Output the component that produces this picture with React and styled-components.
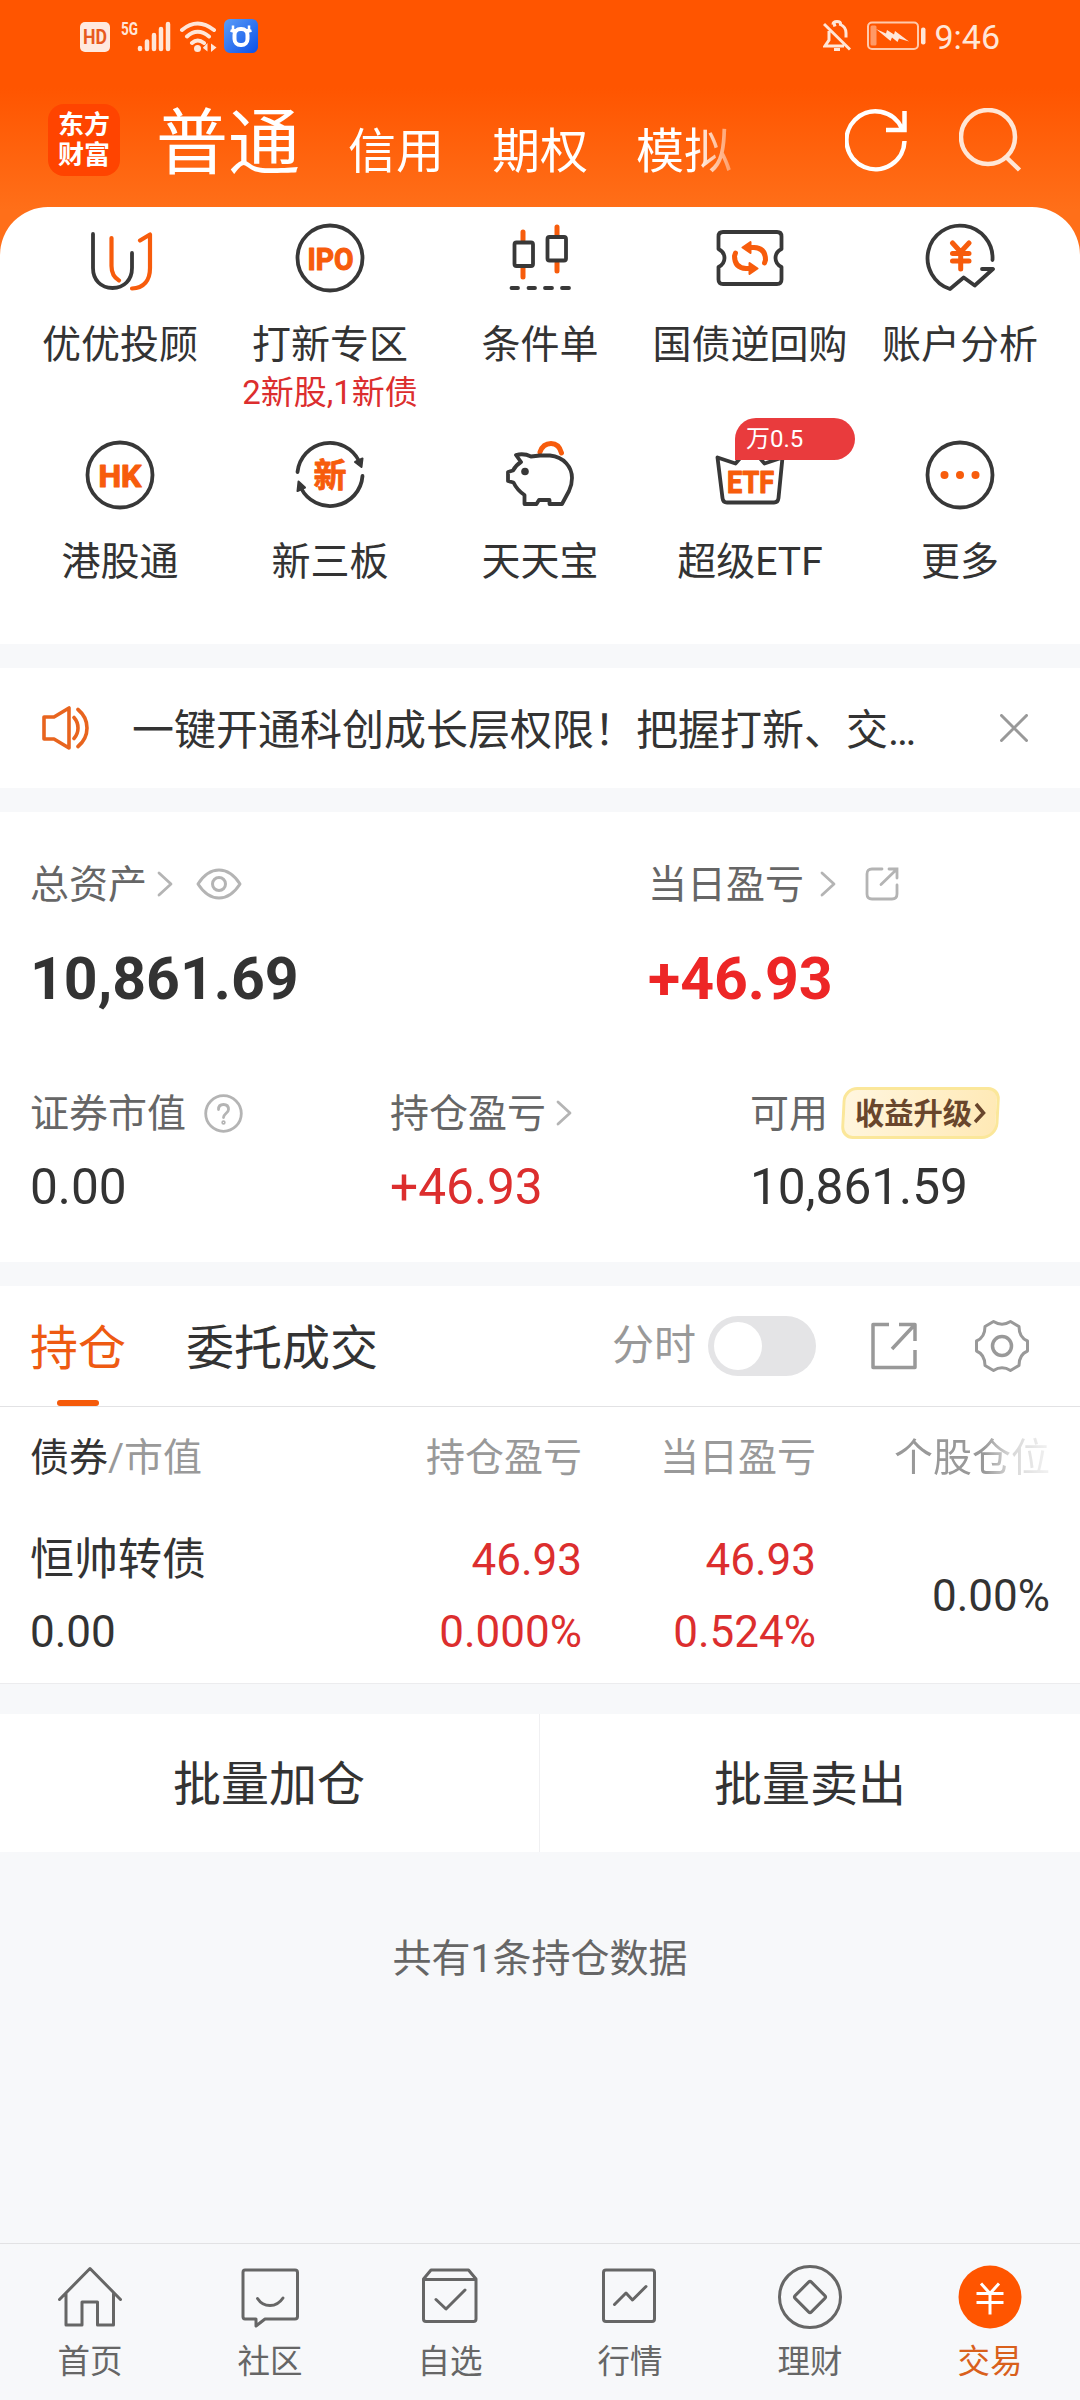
import React from 'react'
import styled, { createGlobalStyle, ThemeProvider } from 'styled-components'

const theme = {
  colors: {
    brand: '#ff5500',
    accent: '#f55a0a',
    dark: '#333333',
    text: '#666666',
    muted: '#999999',
    faint: '#b4b4b4',
    up: '#dc2e2e',
    upStrong: '#ed2626',
    page: '#f7f8fa',
    line: '#e2e2e4',
    status: '#ffe6d8',
  },
  font: `Roboto, 'Noto Sans CJK SC', sans-serif`,
}

const GlobalStyle = createGlobalStyle`
  * {
    box-sizing: border-box;
  }

  body {
    margin: 0;
    background: #f7f8fa;
  }

  svg {
    display: block;
    flex: none;
  }
`

const Screen = styled.div`
  width: 1080px;
  height: 2400px;
  overflow: hidden;
  display: flex;
  flex-direction: column;
  background: ${({ theme }) => theme.colors.page};
  color: ${({ theme }) => theme.colors.dark};
  font-family: ${({ theme }) => theme.font};
  white-space: nowrap;
`

/* header */

const Header = styled.header`
  flex: none;
  height: 255px;
  background: linear-gradient(#ff5500 88px, #ff6f19 210px);
`

const StatusBar = styled.div`
  height: 72px;
  padding: 0 80px;
  display: flex;
  justify-content: space-between;
  align-items: center;
  color: ${({ theme }) => theme.colors.status};
`

const StatusGroup = styled.div`
  display: flex;
  align-items: center;
`

const Clock = styled.span`
  font-size: 34px;
  line-height: 40px;
  margin-left: 8px;
  padding-top: 1px;
`

const HeaderBar = styled.div`
  height: 135px;
  padding: 0 58px 0 48px;
  display: flex;
  align-items: center;
`

const Logo = styled.div`
  width: 72px;
  height: 72px;
  border-radius: 16px;
  background: #ff4400;
  color: #fff;
  font-size: 26px;
  font-weight: 700;
  line-height: 30px;
  display: flex;
  flex-direction: column;
  align-items: center;
  justify-content: center;
`

const HeaderTabs = styled.nav`
  width: 600px;
  margin: 0 auto 0 36px;
  padding-top: 16px;
  display: flex;
  align-items: baseline;
  gap: 48px;
  color: #fff;
  mask-image: linear-gradient(to right, #000 538px, transparent 596px);
`

const HeaderTab = styled.span`
  font-size: ${({ $active }) => ($active ? '72px' : '48px')};
  line-height: 96px;
`

const HeaderActions = styled.div`
  display: flex;
  gap: 50px;
`

/* shortcuts */

const Shortcuts = styled.section`
  flex: none;
  height: 437px;
  margin-top: -48px;
  padding: 15px 15px 0;
  border-radius: 48px 48px 0 0;
  background: #fff;
  display: grid;
  grid-template-columns: repeat(5, 210px);
  grid-template-rows: 217px 205px;
`

const Shortcut = styled.div`
  display: flex;
  flex-direction: column;
  align-items: center;
`

const ShortcutIcon = styled.div`
  position: relative;
  width: 72px;
  height: 72px;
`

const ShortcutLabel = styled.span`
  margin-top: 29px;
  font-size: 39px;
  line-height: 44px;
`

const ShortcutNote = styled.span`
  margin-top: 8px;
  font-size: 33px;
  line-height: 36px;
  color: ${({ theme }) => theme.colors.up};
`

const ShortcutBadge = styled.span`
  position: absolute;
  left: 21px;
  top: -21px;
  width: 120px;
  height: 42px;
  padding-left: 11px;
  border-radius: 21px 21px 21px 0;
  background: #e93b3d;
  color: #fff;
  font-size: 24px;
  line-height: 43px;
`

/* notice */

const Notice = styled.section`
  flex: none;
  height: 120px;
  margin-top: 24px;
  padding: 0 52px 0 42px;
  background: #fff;
  display: flex;
  align-items: center;
`

const NoticeText = styled.p`
  width: 800px;
  margin: 0 auto 0 42px;
  font-size: 42px;
  line-height: 50px;
  padding-top: 5px;
`

/* assets */

const Assets = styled.section`
  flex: none;
  height: 450px;
  margin-top: 24px;
  padding: 46px 30px 0;
  background: #fff;
`

const AssetRow = styled.div`
  display: grid;
  grid-template-columns: ${({ $columns }) => $columns};
  margin-bottom: ${({ $gap }) => $gap || 0}px;
`

const AssetLabel = styled.div`
  height: 52px;
  display: flex;
  align-items: center;
  font-size: 39px;
  color: ${({ theme }) => theme.colors.text};

  span {
    line-height: 50px;
    padding-top: 1px;
  }
`

const Total = styled.div`
  margin-top: 34px;
  font-size: 59px;
  font-weight: 700;
  line-height: 70px;
  color: ${({ theme, $up }) => ($up ? theme.colors.upStrong : theme.colors.dark)};
`

const Amount = styled.div`
  margin-top: 20px;
  font-size: 49.6px;
  line-height: 56px;
  color: ${({ theme, $up }) => ($up ? theme.colors.up : theme.colors.dark)};
`

const Spacer = styled.i`
  width: ${({ $w }) => $w}px;
`

const Upgrade = styled.div`
  width: 157px;
  height: 52px;
  margin-left: 14px;
  padding-left: 10px;
  display: flex;
  align-items: center;
  gap: 2px;
  border: 3px solid #fbe79a;
  border-radius: 14px 12px 16px 12px;
  background: linear-gradient(100deg, #fff6df, #ffe9b5);
  transform: skewX(-3deg);
  color: #69462c;
  font-size: 29.3px;
  font-weight: 700;

  span {
    transform: skewX(3deg);
  }
`

/* positions */

const Positions = styled.section`
  flex: none;
  height: 398px;
  margin-top: 24px;
  background: #fff;
  border-bottom: 1px solid #ececee;
`

const PositionTabs = styled.div`
  height: 121px;
  padding: 0 51px 0 30px;
  display: flex;
  align-items: center;
  border-bottom: 1px solid ${({ theme }) => theme.colors.line};
`

const PositionTab = styled.div`
  height: 120px;
  margin-right: 60px;
  display: flex;
  flex-direction: column;
  align-items: center;
  font-size: 48px;
  line-height: 60px;
  padding-top: 33px;
  color: ${({ theme, $active }) => ($active ? '#ee5a12' : theme.colors.dark)};

  &::after {
    content: '';
    width: 42px;
    height: 6px;
    margin-top: 21px;
    border-radius: 3px;
    background: ${({ theme, $active }) => ($active ? theme.colors.accent : 'transparent')};
  }
`

const PositionTools = styled.div`
  margin-left: auto;
  display: flex;
  align-items: center;
  font-size: 42px;
  line-height: 50px;
  color: ${({ theme }) => theme.colors.muted};
`

const Switch = styled.div`
  width: 108px;
  height: 60px;
  margin: 0 55px 0 12px;
  padding: 6px;
  border-radius: 30px;
  background: #e4e4e6;

  &::before {
    content: '';
    display: block;
    width: 48px;
    height: 48px;
    border-radius: 50%;
    background: #fff;
  }
`

const TableRow = styled.div`
  display: grid;
  grid-template-columns: 318px 234px 234px 234px;
  padding: 0 30px;
  align-items: center;
`

const HeadRow = styled(TableRow)`
  height: 98px;
  font-size: 39px;
  line-height: 50px;
  padding-top: 3px;
  color: ${({ theme }) => theme.colors.muted};

  b {
    font-weight: 400;
    color: ${({ theme }) => theme.colors.dark};
  }
`

const BodyRow = styled(TableRow)`
  height: 178px;
  padding-top: 3px;
  font-size: 44px;
`

const Cell = styled.div`
  display: flex;
  flex-direction: column;
  align-items: ${({ $left }) => ($left ? 'flex-start' : 'flex-end')};
  line-height: 72px;
  color: ${({ theme, $up }) => ($up ? theme.colors.up : 'inherit')};
`

const HeadCell = styled.div`
  text-align: ${({ $left }) => ($left ? 'left' : 'right')};
  mask-image: ${({ $fade }) =>
    $fade
      ? 'linear-gradient(to right, #000 168px, rgba(0, 0, 0, 0.4) 194px, rgba(0, 0, 0, 0.15) 230px)'
      : 'none'};
`

/* batch actions */

const Batch = styled.section`
  flex: none;
  height: 138px;
  margin-top: 30px;
  background: #fff;
  display: grid;
  grid-template-columns: 540px 540px;
`

const BatchButton = styled.div`
  display: flex;
  align-items: center;
  justify-content: center;
  padding: 4px 2px 0 0;
  font-size: 48px;
  line-height: 60px;

  & + & {
    border-left: 1px solid #f0f0f2;
    margin-left: -1px;
    padding-right: 0;
  }
`

const Summary = styled.p`
  margin: 77px 0 0;
  font-size: 39px;
  line-height: 60px;
  text-align: center;
  color: ${({ theme }) => theme.colors.text};
`

/* bottom navigation */

const BottomNav = styled.nav`
  height: 157px;
  margin-top: auto;
  border-top: 1px solid ${({ theme }) => theme.colors.line};
  display: grid;
  grid-template-columns: repeat(6, 180px);
`

const NavItem = styled.div`
  display: flex;
  flex-direction: column;
  align-items: center;
  padding-top: 21px;
  font-size: 32.5px;
  line-height: 40px;
  color: ${({ $active }) => ($active ? '#d9601c' : '#666666')};

  span {
    margin-top: 13px;
  }
`

/* icons */

const Orange = '#f75c0c'

const Glyph = ({ children, size = 72 }) => (
  <svg
    width={size}
    height={size}
    viewBox={`0 0 ${size} ${size}`}
    fill="none"
    stroke="#383838"
    strokeWidth="3.8"
    strokeLinecap="round"
    strokeLinejoin="round"
  >
    {children}
  </svg>
)

const GlyphText = ({ x, y, width, children }) => (
  <text
    x={x}
    y={y}
    textLength={width}
    lengthAdjust="spacingAndGlyphs"
    fontSize="31"
    fontWeight="700"
    fill={Orange}
    stroke={Orange}
    strokeWidth="1.2"
  >
    {children}
  </text>
)

const AdvisorIcon = () => (
  <Glyph>
    <path d="M9 12V46C9 58 17 66 28.500 66S48 58 48 46V31" />
    <g stroke={Orange} strokeWidth="4.200">
      <path d="M27.500 16V44Q27.500 54 35 58.500" />
      <path d="M56 18.500 66 12.500V46C66 58 60 66 48 66.500" />
    </g>
  </Glyph>
)

const IpoIcon = () => (
  <Glyph>
    <circle cx="36" cy="36" r="32.500" />
    <GlyphText x="13.500" y="47.500" width="46">IPO</GlyphText>
  </Glyph>
)

const OrderIcon = () => (
  <Glyph>
    <path stroke={Orange} strokeWidth="5" d="M19 10V18M19 46V55M53 5V13M53 41V49" />
    <rect x="10.500" y="20.500" width="18.500" height="23.500" rx="2" />
    <rect x="43.500" y="15" width="18.500" height="23.500" rx="2" />
    <path d="M7.500 66H14M24.500 66H31M41 66H48M58 66H65" />
  </Glyph>
)

const RepoIcon = () => (
  <Glyph>
    <path d="M9 10H63Q67.500 10 67.500 14.500V27Q61.500 30 61.500 36T67.500 45V57.500Q67.500 62 63 62H9Q4.500 62 4.500 57.500V45Q10.500 42 10.500 36T4.500 27V14.500Q4.500 10 9 10Z" />
    <g stroke={Orange} strokeWidth="5">
      <path d="M36 25.500H40Q51.500 26 51.500 38L50.500 41M36 46.500H32Q20.500 46 20.500 34L21.500 31" />
      <path strokeWidth="2" fill={Orange} d="M28.500 25.500 36.500 20V31ZM43.500 46.500 35.500 41V52Z" />
    </g>
  </Glyph>
)

const AnalysisIcon = () => (
  <Glyph>
    <path d="M68.500 38A32.500 32.500 0 1 0 26 67L39.700 55.500 50.700 63.500 69 47H58" />
    <path stroke={Orange} strokeWidth="5" d="M28.500 21 36.700 30 45 21M36.700 30V47M28.500 31.500H45M28.500 39H45" />
  </Glyph>
)

const HkIcon = () => (
  <Glyph>
    <circle cx="36" cy="36" r="32.500" />
    <GlyphText x="14.500" y="47.500" width="43">HK</GlyphText>
  </Glyph>
)

const NewBoardIcon = () => (
  <Glyph>
    <path d="M3.500 33A32.500 32.500 0 0 1 65 22M68.500 37A32.500 32.500 0 0 1 7 49" />
    <path strokeWidth="2" fill="#383838" d="M61 23 68.500 19.500 67.500 28ZM11 48.500 3.500 52 4.500 42.500Z" />
    <text x="36" y="48" textAnchor="middle" fontSize="33" fontWeight="700" fill={Orange} stroke={Orange} strokeWidth="0.8">
      新
    </text>
  </Glyph>
)

const PiggyIcon = () => (
  <Glyph>
    <path stroke={Orange} strokeWidth="5" d="M36 13Q39 4.500 47 4.500T57.500 14" />
    <path d="M12 16Q20 14 27 17.500L36 16.500H46C60 18 68 28 68 39Q68 46 65 52L58 65H45.500V61H35L32.500 65H20.500V56Q13 51 9.500 43.500L4 42V33L9 31.500Q12 26 17 23Z" />
    <circle cx="21" cy="32.500" r="3.800" fill="#383838" stroke="none" />
  </Glyph>
)

const EtfIcon = () => (
  <Glyph>
    <path d="M3.500 18.500 21.500 24.500 36 8 50.500 24.500 68.500 18.500 64.500 59Q64 63.500 60 63.500H13Q9 63.500 8.500 59Z" />
    <GlyphText x="13" y="53.500" width="47">ETF</GlyphText>
  </Glyph>
)

const MoreIcon = () => (
  <Glyph>
    <circle cx="36" cy="36" r="32.500" />
    <g fill={Orange} stroke="none">
      <circle cx="20.500" cy="36" r="4" />
      <circle cx="36" cy="36" r="4" />
      <circle cx="51.500" cy="36" r="4" />
    </g>
  </Glyph>
)

const StatusLeftIcons = () => (
  <svg width="180" height="36" viewBox="0 0 180 36" fill="none">
    <rect x="0" y="4" width="30" height="30" rx="5" fill="#ffe9df" />
    <text x="3" y="26" fontSize="20" fontWeight="700" textLength="24" lengthAdjust="spacingAndGlyphs" fill="#e8591e">
      HD
    </text>
    <text x="41" y="17" fontSize="19" fontWeight="700" textLength="17" lengthAdjust="spacingAndGlyphs" fill="#ffe6d8">
      5G
    </text>
    <g stroke="#ffe6d8" strokeWidth="4.500" strokeLinecap="round">
      <path d="M60 30V31M67 23.500V31M74 17V31M81 11V31M88 6V31" />
    </g>
    <g stroke="#ffe6d8" strokeWidth="4" strokeLinecap="round">
      <path d="M102 12Q117.500-1 134 12M107 18.500Q117.500 9 129 18.500M112 25Q117.500 20 124 25" />
    </g>
    <circle cx="117.500" cy="30.500" r="3.500" fill="#ffe6d8" />
    <path d="M123 29.500 127.500 25V33.500L123 30ZM131 25.500 136.500 29.500 131 34Z" fill="#ffe6d8" />
    <defs>
      <linearGradient id="appBlue" x1="0" y1="0" x2="1" y2="1">
        <stop offset="0" stopColor="#5a9df8" />
        <stop offset="1" stopColor="#0b50e8" />
      </linearGradient>
    </defs>
    <rect x="144" y="1" width="34" height="34" rx="6" fill="url(#appBlue)" />
    <rect x="154.500" y="11" width="13" height="16" rx="6" stroke="#fff" strokeWidth="4" />
    <path d="M153 7.500V11.500L158 13M169 7.500V11.500L164 13M150.500 12.500 155 14M171.500 12.500 167 14" stroke="#fff" strokeWidth="2.500" />
  </svg>
)

const BellOffIcon = () => (
  <svg width="28" height="32" viewBox="0 0 28 32" fill="none" stroke="#ffe6d8" strokeWidth="3">
    <path d="M1 4 27 29.500M6 11V20L2 26H21M10 4.500Q10 1.500 14 1.500T17.500 4.500Q23 7 23 13V17.500M10 5.500 13 4.500" />
    <path d="M11 29.500H17" />
  </svg>
)

const BatteryIcon = () => (
  <svg width="59" height="30" viewBox="0 0 59 30" fill="none">
    <rect x="1" y="1.500" width="50" height="26.500" rx="4" stroke="#ffc9ab" strokeWidth="2" />
    <rect x="3.500" y="4.500" width="6" height="20" rx="1.500" fill="#ff9966" />
    <path d="M9 8 19 12.500 20 9 27 13.500 28 10 42 20.500 32 17.500 30.500 21 25 16.500 23.500 20Z" fill="#ffe6d8" />
    <rect x="54" y="6.500" width="4.500" height="17" rx="2" fill="#ffe6d8" />
  </svg>
)

const RefreshIcon = () => (
  <svg width="64" height="64" viewBox="0 0 64 64" fill="none" stroke="#fff" strokeWidth="4.500">
    <path d="M59.500 33A29 29 0 1 1 57 20.500M41 22H59.500V3" />
  </svg>
)

const SearchIcon = () => (
  <svg width="63" height="64" viewBox="0 0 63 64" fill="none" stroke="#ffe6d6" strokeWidth="4.500">
    <circle cx="29" cy="29" r="27" />
    <path d="M47 49 60.500 62" />
  </svg>
)

const SpeakerIcon = () => (
  <svg width="48" height="44" viewBox="0 0 48 44" fill="none" stroke="#e8641e" strokeWidth="3.600" strokeLinejoin="round" strokeLinecap="round">
    <path d="M2 11H12L27 2V42L12 33H2ZM32 11.500Q36 16 36 22T32 32.500M36 3.500Q45 11 45 22T36 40.500" />
  </svg>
)

const CloseIcon = () => (
  <svg width="28" height="28" viewBox="0 0 28 28" stroke="#999" strokeWidth="3" strokeLinecap="round">
    <path d="M1.500 1.500 26.500 26.500M26.500 1.500 1.500 26.500" />
  </svg>
)

const Chevron = () => (
  <svg width="16" height="26" viewBox="0 0 16 26" fill="none" stroke="#b4b4b4" strokeWidth="2.800" strokeLinecap="round" strokeLinejoin="round">
    <path d="M2 2 14 13 2 24" />
  </svg>
)

const EyeIcon = () => (
  <svg width="46" height="32" viewBox="0 0 46 32" fill="none" stroke="#b4b4b4" strokeWidth="3" strokeLinejoin="round">
    <path d="M2 16Q11 2 23 2T44 16Q35 30 23 30T2 16Z" />
    <circle cx="23" cy="16" r="6.500" />
  </svg>
)

const HelpIcon = () => (
  <svg width="39" height="39" viewBox="0 0 39 39" fill="none" stroke="#b4b4b4" strokeWidth="2.800" strokeLinecap="round">
    <circle cx="19.500" cy="19.500" r="17.800" />
    <path d="M14.500 15.500Q14.500 10.500 19.500 10.500T24.500 15.500C24.500 19 19.500 19.500 19.500 23.500" />
    <circle cx="19.500" cy="28.500" r="0.800" />
  </svg>
)

const ShareIcon = () => (
  <svg width="34" height="34" viewBox="0 0 34 34" fill="none" stroke="#b4b4b4" strokeWidth="2.800" strokeLinecap="round">
    <path d="M17 2H7Q2 2 2 7V27Q2 32 7 32H27Q32 32 32 27V18M24 2H32V11M31 3 16 17.500" />
  </svg>
)

const ExportIcon = () => (
  <svg width="46" height="48" viewBox="0 0 46 48" fill="none" stroke="#999" strokeWidth="3.500" strokeLinejoin="round">
    <path d="M18 2.500H2V45.500H44V28M28 2.500H44V19M43 3.500 21 27" />
  </svg>
)

const GearIcon = () => (
  <svg width="54" height="54" viewBox="0 0 54 54" fill="none" stroke="#999" strokeWidth="3" strokeLinejoin="round">
    <path d="M18.500 2.500Q27 8 35.500 2.500L44 7.500Q44 18.500 52.500 22V32Q44 35.500 44 46.500L35.500 51.500Q27 46 18.500 51.500L10 46.500Q10 35.500 1.500 32V22Q10 18.500 10 7.500Z" />
    <circle cx="27" cy="27" r="9.500" strokeWidth="3.500" />
  </svg>
)

const NavGlyph = ({ children }) => (
  <svg width="64" height="64" viewBox="0 0 64 64" fill="none" stroke="#666" strokeWidth="3" strokeLinecap="round" strokeLinejoin="round">
    {children}
  </svg>
)

const HomeIcon = () => (
  <NavGlyph>
    <path d="M1.500 34.500 32 3.500 62.500 34.500M8 28.500V60H24V37H39.500V60H55.500V28.500" />
  </NavGlyph>
)

const CommunityIcon = () => (
  <NavGlyph>
    <path d="M7 5H57Q59.500 5 59.500 7.500V51.500Q59.500 54 57 54H27L18 61V54H7Q5 54 5 51.500V7.500Q5 5 7 5Z" />
    <path d="M19.500 33.500Q24 40.500 32 40.500T45 33" />
  </NavGlyph>
)

const WatchlistIcon = () => (
  <NavGlyph>
    <path d="M5.500 14 13 5H50.500L58 14V54Q58 56.500 55.500 56.500H8Q5.500 56.500 5.500 54ZM5.500 14.500H58M18 34.500 28 44 47 25" />
  </NavGlyph>
)

const MarketIcon = () => (
  <NavGlyph>
    <rect x="5.500" y="5" width="51" height="51.500" rx="2.500" />
    <path d="M16.500 39.500 28 28 34.500 35 48 21.500" />
  </NavGlyph>
)

const WealthIcon = () => (
  <NavGlyph>
    <circle cx="32" cy="32" r="30.500" />
    <rect x="20.500" y="20.500" width="23" height="23" rx="2" transform="rotate(45 32 32)" />
  </NavGlyph>
)

const TradeIcon = () => (
  <NavGlyph>
    <circle cx="32" cy="32" r="31.500" fill="#ff5500" stroke="none" />
    <path stroke="#fff" strokeLinecap="butt" d="M23 18.500 32 28.500 41 18.500M32 28V49.500M18.500 28.500H45.500M18.500 37.500H45.500" />
  </NavGlyph>
)

const shortcuts = [
  { label: '优优投顾', icon: AdvisorIcon },
  { label: '打新专区', icon: IpoIcon, note: '2新股,1新债' },
  { label: '条件单', icon: OrderIcon },
  { label: '国债逆回购', icon: RepoIcon },
  { label: '账户分析', icon: AnalysisIcon },
  { label: '港股通', icon: HkIcon },
  { label: '新三板', icon: NewBoardIcon },
  { label: '天天宝', icon: PiggyIcon },
  { label: '超级ETF', icon: EtfIcon, badge: '万0.5' },
  { label: '更多', icon: MoreIcon },
]

const navItems = [
  { label: '首页', icon: HomeIcon },
  { label: '社区', icon: CommunityIcon },
  { label: '自选', icon: WatchlistIcon },
  { label: '行情', icon: MarketIcon },
  { label: '理财', icon: WealthIcon },
  { label: '交易', icon: TradeIcon, active: true },
]

export default function App() {
  return (
    <ThemeProvider theme={theme}>
      <GlobalStyle />
      <Screen>
        <Header>
          <StatusBar>
            <StatusLeftIcons />
            <StatusGroup>
              <BellOffIcon />
              <Spacer $w={16} />
              <BatteryIcon />
              <Clock>9:46</Clock>
            </StatusGroup>
          </StatusBar>
          <HeaderBar>
            <Logo>
              <span>东方</span>
              <span>财富</span>
            </Logo>
            <HeaderTabs>
              <HeaderTab $active>普通</HeaderTab>
              <HeaderTab>信用</HeaderTab>
              <HeaderTab>期权</HeaderTab>
              <HeaderTab>模拟</HeaderTab>
            </HeaderTabs>
            <HeaderActions>
              <RefreshIcon />
              <SearchIcon />
            </HeaderActions>
          </HeaderBar>
        </Header>

        <Shortcuts>
          {shortcuts.map(({ label, icon: Icon, note, badge }) => (
            <Shortcut key={label}>
              <ShortcutIcon>
                <Icon />
                {badge && <ShortcutBadge>{badge}</ShortcutBadge>}
              </ShortcutIcon>
              <ShortcutLabel>{label}</ShortcutLabel>
              {note && <ShortcutNote>{note}</ShortcutNote>}
            </Shortcut>
          ))}
        </Shortcuts>

        <Notice>
          <SpeakerIcon />
          <NoticeText>一键开通科创成长层权限！把握打新、交…</NoticeText>
          <CloseIcon />
        </Notice>

        <Assets>
          <AssetRow $columns="618px 1fr" $gap={73}>
            <div>
              <AssetLabel>
                <span>总资产</span>
                <Spacer $w={10} />
                <Chevron />
                <Spacer $w={23} />
                <EyeIcon />
              </AssetLabel>
              <Total>10,861.69</Total>
            </div>
            <div>
              <AssetLabel>
                <span>当日盈亏</span>
                <Spacer $w={16} />
                <Chevron />
                <Spacer $w={29} />
                <ShareIcon />
              </AssetLabel>
              <Total $up>+46.93</Total>
            </div>
          </AssetRow>
          <AssetRow $columns="360px 360px 1fr">
            <div>
              <AssetLabel>
                <span>证券市值</span>
                <Spacer $w={18} />
                <HelpIcon />
              </AssetLabel>
              <Amount>0.00</Amount>
            </div>
            <div>
              <AssetLabel>
                <span>持仓盈亏</span>
                <Spacer $w={10} />
                <Chevron />
              </AssetLabel>
              <Amount $up>+46.93</Amount>
            </div>
            <div>
              <AssetLabel>
                <span>可用</span>
                <Upgrade>
                  <span>收益升级</span>
                  <svg width="12" height="22" viewBox="0 0 12 22" fill="none" stroke="#69462c" strokeWidth="3.500">
                    <path d="M1.500 2 9.500 11 1.500 20" />
                  </svg>
                </Upgrade>
              </AssetLabel>
              <Amount>10,861.59</Amount>
            </div>
          </AssetRow>
        </Assets>

        <Positions>
          <PositionTabs>
            <PositionTab $active>持仓</PositionTab>
            <PositionTab>委托成交</PositionTab>
            <PositionTools>
              <span>分时</span>
              <Switch />
              <ExportIcon />
              <Spacer $w={58} />
              <GearIcon />
            </PositionTools>
          </PositionTabs>
          <HeadRow>
            <HeadCell $left>
              <b>债券</b>/市值
            </HeadCell>
            <HeadCell>持仓盈亏</HeadCell>
            <HeadCell>当日盈亏</HeadCell>
            <HeadCell $fade>个股仓位</HeadCell>
          </HeadRow>
          <BodyRow>
            <Cell $left>
              <span>恒帅转债</span>
              <span>0.00</span>
            </Cell>
            <Cell $up>
              <span>46.93</span>
              <span>0.000%</span>
            </Cell>
            <Cell $up>
              <span>46.93</span>
              <span>0.524%</span>
            </Cell>
            <Cell>
              <span>0.00%</span>
            </Cell>
          </BodyRow>
        </Positions>

        <Batch>
          <BatchButton>批量加仓</BatchButton>
          <BatchButton>批量卖出</BatchButton>
        </Batch>

        <Summary>共有1条持仓数据</Summary>

        <BottomNav>
          {navItems.map(({ label, icon: Icon, active }) => (
            <NavItem key={label} $active={active}>
              <Icon />
              <span>{label}</span>
            </NavItem>
          ))}
        </BottomNav>
      </Screen>
    </ThemeProvider>
  )
}
